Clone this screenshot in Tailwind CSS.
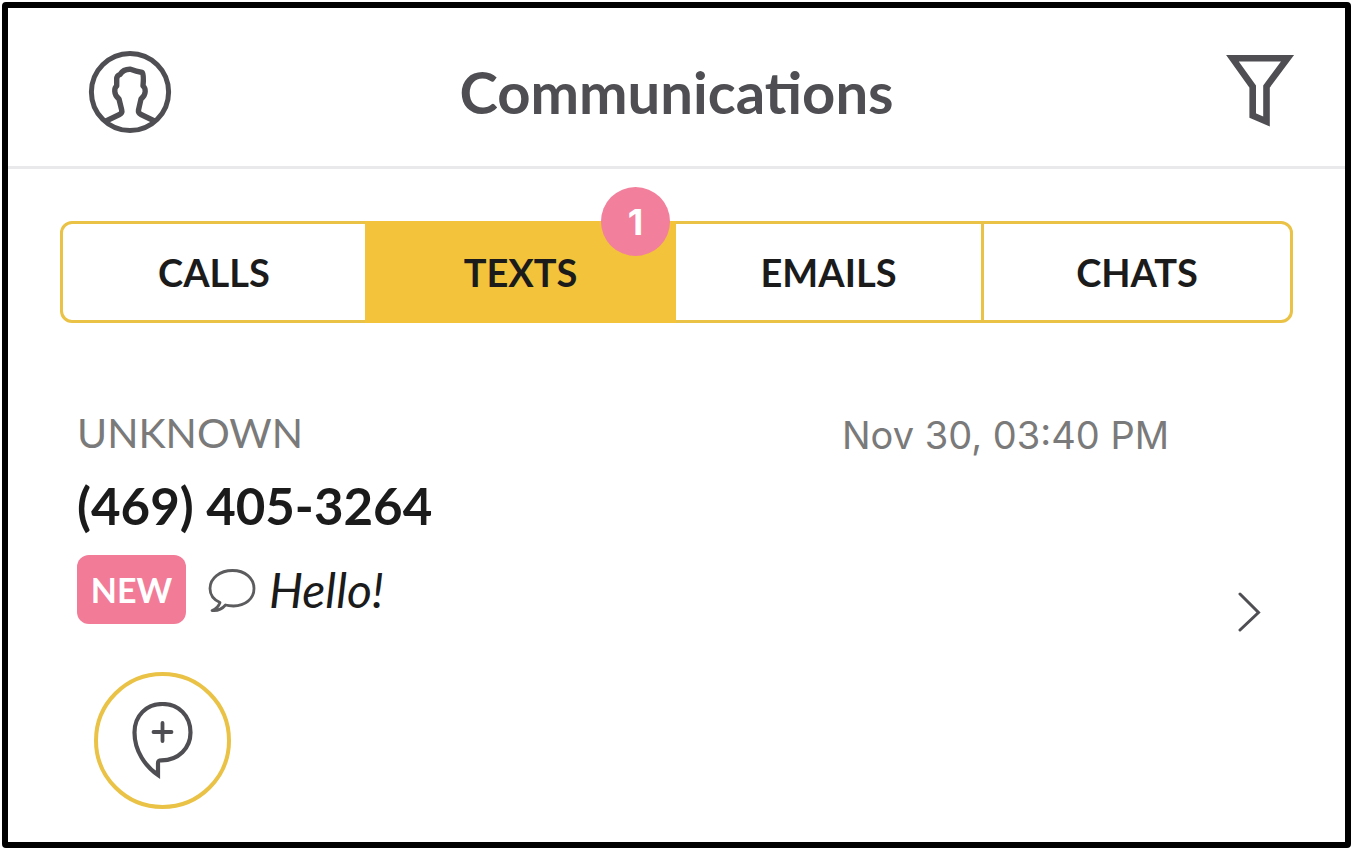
<!DOCTYPE html>
<html lang="en">
<head>
<meta charset="utf-8">
<meta name="viewport" content="width=device-width, initial-scale=1">
<title>Communications</title>
<script src="https://cdn.jsdelivr.net/npm/@tailwindcss/browser@4"></script>
</head>
<body class="bg-white font-[Lato,sans-serif] text-[#1b1b1b]">
<div class="flex min-h-screen p-0.5 pr-[3px]">
<div class="flex-1 rounded-sm border-6 border-black">
  <header class="grid h-[161px] grid-cols-[1fr_auto_1fr] items-center border-b-3 border-[#e9e9eb] pt-2.5 pr-[50px] pl-[50px] text-[#4f4e53]">
    <button type="button" aria-label="Profile" class="ml-[30px] justify-self-start">
      <svg class="block size-[84px]" viewBox="0 0 84 84" fill="none" stroke="currentColor" stroke-width="5" stroke-linejoin="round">
        <circle cx="42" cy="42" r="38.600"/>
        <path stroke-width="5.400" d="M17 71.500L31.500 64.500Q34.500 63 33.700 60L31 49Q27 46 26.800 41.500Q26.500 37.500 28.700 36L28.700 29Q28.700 25.500 32 24.500Q35.500 19 42.500 19.300Q48 21.500 54.300 22.500Q56 25 55 36Q57.500 38 57.200 41.500Q57 46 53 49L50.500 60Q50 63 53 64.500L67.500 71.500"/>
      </svg>
    </button>
    <h1 class="text-[58px] leading-none font-bold">Communications</h1>
    <button type="button" aria-label="Filter" class="justify-self-end">
      <svg class="block h-[76px] w-[70px]" viewBox="0 0 70 76" fill="none" stroke="currentColor" stroke-width="6.600">
        <path d="M7.500 4.300H62.500L41.500 32.500V67.500L27.700 61.500V32.500Z"/>
      </svg>
    </button>
  </header>

  <main class="px-[52px] pt-[52px]">
    <nav aria-label="Channels" class="grid h-[102px] grid-cols-[302fr_311fr_305fr_309fr] rounded-xl border-3 border-[#e9c246] text-[38px] leading-none font-bold">
      <button type="button">CALLS</button>
      <button type="button" class="relative -my-[3px] bg-[#f2c33b]" aria-current="page">TEXTS
        <span class="absolute -top-[34px] right-[6px] flex size-[69px] items-center justify-center rounded-full bg-[#f27f9c] font-[Inter,sans-serif] text-[36px] font-bold text-white">1</span>
      </button>
      <button type="button">EMAILS</button>
      <button type="button" class="border-l-3 border-[#e9c246]">CHATS</button>
    </nav>

    <article class="pt-[86px] pr-8 pl-[17px]">
      <div class="flex items-end justify-between pr-[92px] text-[#7a7a7a]">
        <p class="text-[41px] leading-12">UNKNOWN</p>
        <time class="font-[Inter,sans-serif] text-[38px] leading-11">Nov 30, 03:40 PM</time>
      </div>
      <div class="flex items-end justify-between">
        <div>
          <h2 class="pt-4 text-[51px] leading-[66px] font-bold">(469) 405-3264</h2>
          <div class="flex items-center pt-4">
            <span class="flex h-[69px] w-[109px] items-center justify-center rounded-xl bg-[#f27b97] text-[34px] leading-none font-bold text-white">NEW</span>
            <svg class="ml-[21px] block h-[46px] w-[50px]" viewBox="0 0 50 46" fill="none" stroke="#5c5c5f" stroke-width="2.800" stroke-linejoin="round" aria-hidden="true">
              <path d="M13 35.500C5 32 3 26.500 3 21.500C3 11 13 3.500 25.500 3.500S47 11 47 21.500S38 39 26.500 39Q21.500 38.800 18.500 38Q13 44.500 5 43.500Q11 41.500 13 35.500Z"/>
            </svg>
            <p class="ml-3 text-[48px] leading-none italic">Hello!</p>
          </div>
        </div>
        <a href="#conversation" aria-label="Open conversation" class="-mb-2">
          <svg class="block h-10 w-6" viewBox="0 0 24 40" fill="none" stroke="#4f4e53" stroke-width="3" stroke-linecap="round"><path d="M3 2L21.500 20.500L3 38"/></svg>
        </a>
      </div>
      <button type="button" aria-label="New message" class="mt-12 ml-[17px] flex size-[137px] items-center justify-center rounded-full border-4 border-[#e9c246]">
        <svg class="block h-[78px] w-[62px]" viewBox="0 0 62 78" fill="none" stroke="#4f4e53" stroke-width="4.200">
          <path d="M26 73V61C26 59 27 58.300 29.500 58.300C46.500 58.300 58.500 46 58.500 30.500C58.500 13.500 46.500 2 30.500 2S2.500 13.500 2.500 30.500C2.500 49 13.500 64.500 26 73Z"/>
          <path d="M30.500 21V39M21.500 30H39.500" stroke-linecap="round" stroke-width="3.800"/>
        </svg>
      </button>
    </article>
  </main>
</div>
</div>
</body>
</html>
